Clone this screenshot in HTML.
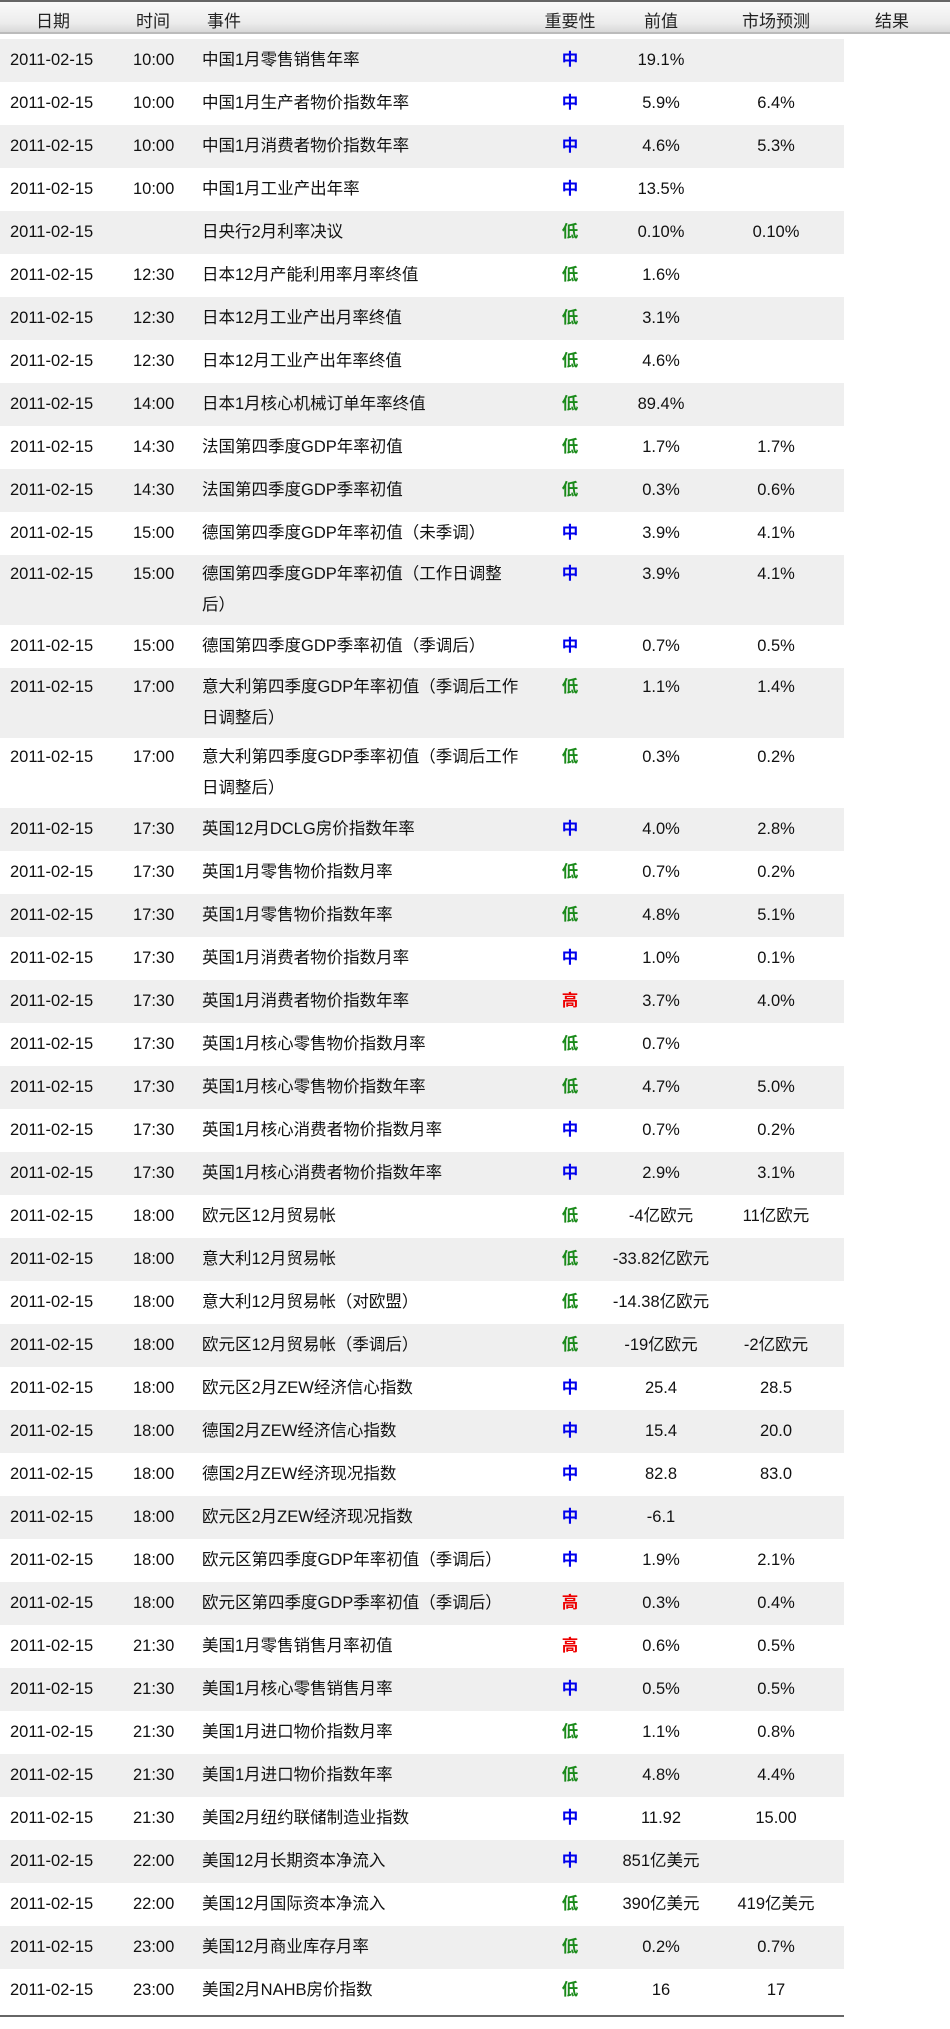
<!DOCTYPE html>
<html><head><meta charset="utf-8">
<style>
html,body{margin:0;padding:0;background:#fff;}
body{width:950px;height:2029px;position:relative;overflow:hidden;font-family:"Liberation Sans","Noto Sans CJK SC",sans-serif;color:#111;}
.hdr{position:absolute;left:0;top:0;width:950px;height:34px;background:linear-gradient(#fafafa,#ececec 70%,#d8d8d8);border-top:2px solid #666;box-sizing:border-box;border-bottom:2px solid #bbb;}
.hdr span{position:absolute;top:5px;font-size:17px;transform:translateX(-50%);white-space:nowrap;color:#222;}
.rows{position:absolute;left:0;top:39px;width:844px;}
.r{position:relative;height:43px;}
.r.d{height:70px;}
.r.g{background:#efefef;}
.r span{position:absolute;top:6px;line-height:31px;font-size:16.5px;white-space:nowrap;}
.r.d span{top:4px;}
.c1{left:10px;}
.c2{left:133px;}
.c3{left:202px;font-size:16.5px!important;}
.c4{left:570px;transform:translateX(-50%);font-weight:bold;}
.c5{left:661px;transform:translateX(-50%);}
.c6{left:776px;transform:translateX(-50%);}
.b{color:#0000ee}.gr{color:#1a8a1a}.rd{color:#ee0000}
.line{position:absolute;left:0;top:2015px;width:844px;height:2px;background:#666;}
</style></head><body>
<div class="hdr">
<span style="left:53px">日期</span><span style="left:153px">时间</span><span style="left:224px">事件</span><span style="left:570px">重要性</span><span style="left:661px">前值</span><span style="left:776px">市场预测</span><span style="left:892px">结果</span>
</div>
<div class="rows">
<div class="r g"><span class="c1">2011-02-15</span><span class="c2">10:00</span><span class="c3">中国1月零售销售年率</span><span class="c4 b">中</span><span class="c5">19.1%</span><span class="c6"></span></div>
<div class="r"><span class="c1">2011-02-15</span><span class="c2">10:00</span><span class="c3">中国1月生产者物价指数年率</span><span class="c4 b">中</span><span class="c5">5.9%</span><span class="c6">6.4%</span></div>
<div class="r g"><span class="c1">2011-02-15</span><span class="c2">10:00</span><span class="c3">中国1月消费者物价指数年率</span><span class="c4 b">中</span><span class="c5">4.6%</span><span class="c6">5.3%</span></div>
<div class="r"><span class="c1">2011-02-15</span><span class="c2">10:00</span><span class="c3">中国1月工业产出年率</span><span class="c4 b">中</span><span class="c5">13.5%</span><span class="c6"></span></div>
<div class="r g"><span class="c1">2011-02-15</span><span class="c2"></span><span class="c3">日央行2月利率决议</span><span class="c4 gr">低</span><span class="c5">0.10%</span><span class="c6">0.10%</span></div>
<div class="r"><span class="c1">2011-02-15</span><span class="c2">12:30</span><span class="c3">日本12月产能利用率月率终值</span><span class="c4 gr">低</span><span class="c5">1.6%</span><span class="c6"></span></div>
<div class="r g"><span class="c1">2011-02-15</span><span class="c2">12:30</span><span class="c3">日本12月工业产出月率终值</span><span class="c4 gr">低</span><span class="c5">3.1%</span><span class="c6"></span></div>
<div class="r"><span class="c1">2011-02-15</span><span class="c2">12:30</span><span class="c3">日本12月工业产出年率终值</span><span class="c4 gr">低</span><span class="c5">4.6%</span><span class="c6"></span></div>
<div class="r g"><span class="c1">2011-02-15</span><span class="c2">14:00</span><span class="c3">日本1月核心机械订单年率终值</span><span class="c4 gr">低</span><span class="c5">89.4%</span><span class="c6"></span></div>
<div class="r"><span class="c1">2011-02-15</span><span class="c2">14:30</span><span class="c3">法国第四季度GDP年率初值</span><span class="c4 gr">低</span><span class="c5">1.7%</span><span class="c6">1.7%</span></div>
<div class="r g"><span class="c1">2011-02-15</span><span class="c2">14:30</span><span class="c3">法国第四季度GDP季率初值</span><span class="c4 gr">低</span><span class="c5">0.3%</span><span class="c6">0.6%</span></div>
<div class="r"><span class="c1">2011-02-15</span><span class="c2">15:00</span><span class="c3">德国第四季度GDP年率初值（未季调）</span><span class="c4 b">中</span><span class="c5">3.9%</span><span class="c6">4.1%</span></div>
<div class="r g d"><span class="c1">2011-02-15</span><span class="c2">15:00</span><span class="c3">德国第四季度GDP年率初值（工作日调整<br>后）</span><span class="c4 b">中</span><span class="c5">3.9%</span><span class="c6">4.1%</span></div>
<div class="r"><span class="c1">2011-02-15</span><span class="c2">15:00</span><span class="c3">德国第四季度GDP季率初值（季调后）</span><span class="c4 b">中</span><span class="c5">0.7%</span><span class="c6">0.5%</span></div>
<div class="r g d"><span class="c1">2011-02-15</span><span class="c2">17:00</span><span class="c3">意大利第四季度GDP年率初值（季调后工作<br>日调整后）</span><span class="c4 gr">低</span><span class="c5">1.1%</span><span class="c6">1.4%</span></div>
<div class="r d"><span class="c1">2011-02-15</span><span class="c2">17:00</span><span class="c3">意大利第四季度GDP季率初值（季调后工作<br>日调整后）</span><span class="c4 gr">低</span><span class="c5">0.3%</span><span class="c6">0.2%</span></div>
<div class="r g"><span class="c1">2011-02-15</span><span class="c2">17:30</span><span class="c3">英国12月DCLG房价指数年率</span><span class="c4 b">中</span><span class="c5">4.0%</span><span class="c6">2.8%</span></div>
<div class="r"><span class="c1">2011-02-15</span><span class="c2">17:30</span><span class="c3">英国1月零售物价指数月率</span><span class="c4 gr">低</span><span class="c5">0.7%</span><span class="c6">0.2%</span></div>
<div class="r g"><span class="c1">2011-02-15</span><span class="c2">17:30</span><span class="c3">英国1月零售物价指数年率</span><span class="c4 gr">低</span><span class="c5">4.8%</span><span class="c6">5.1%</span></div>
<div class="r"><span class="c1">2011-02-15</span><span class="c2">17:30</span><span class="c3">英国1月消费者物价指数月率</span><span class="c4 b">中</span><span class="c5">1.0%</span><span class="c6">0.1%</span></div>
<div class="r g"><span class="c1">2011-02-15</span><span class="c2">17:30</span><span class="c3">英国1月消费者物价指数年率</span><span class="c4 rd">高</span><span class="c5">3.7%</span><span class="c6">4.0%</span></div>
<div class="r"><span class="c1">2011-02-15</span><span class="c2">17:30</span><span class="c3">英国1月核心零售物价指数月率</span><span class="c4 gr">低</span><span class="c5">0.7%</span><span class="c6"></span></div>
<div class="r g"><span class="c1">2011-02-15</span><span class="c2">17:30</span><span class="c3">英国1月核心零售物价指数年率</span><span class="c4 gr">低</span><span class="c5">4.7%</span><span class="c6">5.0%</span></div>
<div class="r"><span class="c1">2011-02-15</span><span class="c2">17:30</span><span class="c3">英国1月核心消费者物价指数月率</span><span class="c4 b">中</span><span class="c5">0.7%</span><span class="c6">0.2%</span></div>
<div class="r g"><span class="c1">2011-02-15</span><span class="c2">17:30</span><span class="c3">英国1月核心消费者物价指数年率</span><span class="c4 b">中</span><span class="c5">2.9%</span><span class="c6">3.1%</span></div>
<div class="r"><span class="c1">2011-02-15</span><span class="c2">18:00</span><span class="c3">欧元区12月贸易帐</span><span class="c4 gr">低</span><span class="c5">-4亿欧元</span><span class="c6">11亿欧元</span></div>
<div class="r g"><span class="c1">2011-02-15</span><span class="c2">18:00</span><span class="c3">意大利12月贸易帐</span><span class="c4 gr">低</span><span class="c5">-33.82亿欧元</span><span class="c6"></span></div>
<div class="r"><span class="c1">2011-02-15</span><span class="c2">18:00</span><span class="c3">意大利12月贸易帐（对欧盟）</span><span class="c4 gr">低</span><span class="c5">-14.38亿欧元</span><span class="c6"></span></div>
<div class="r g"><span class="c1">2011-02-15</span><span class="c2">18:00</span><span class="c3">欧元区12月贸易帐（季调后）</span><span class="c4 gr">低</span><span class="c5">-19亿欧元</span><span class="c6">-2亿欧元</span></div>
<div class="r"><span class="c1">2011-02-15</span><span class="c2">18:00</span><span class="c3">欧元区2月ZEW经济信心指数</span><span class="c4 b">中</span><span class="c5">25.4</span><span class="c6">28.5</span></div>
<div class="r g"><span class="c1">2011-02-15</span><span class="c2">18:00</span><span class="c3">德国2月ZEW经济信心指数</span><span class="c4 b">中</span><span class="c5">15.4</span><span class="c6">20.0</span></div>
<div class="r"><span class="c1">2011-02-15</span><span class="c2">18:00</span><span class="c3">德国2月ZEW经济现况指数</span><span class="c4 b">中</span><span class="c5">82.8</span><span class="c6">83.0</span></div>
<div class="r g"><span class="c1">2011-02-15</span><span class="c2">18:00</span><span class="c3">欧元区2月ZEW经济现况指数</span><span class="c4 b">中</span><span class="c5">-6.1</span><span class="c6"></span></div>
<div class="r"><span class="c1">2011-02-15</span><span class="c2">18:00</span><span class="c3">欧元区第四季度GDP年率初值（季调后）</span><span class="c4 b">中</span><span class="c5">1.9%</span><span class="c6">2.1%</span></div>
<div class="r g"><span class="c1">2011-02-15</span><span class="c2">18:00</span><span class="c3">欧元区第四季度GDP季率初值（季调后）</span><span class="c4 rd">高</span><span class="c5">0.3%</span><span class="c6">0.4%</span></div>
<div class="r"><span class="c1">2011-02-15</span><span class="c2">21:30</span><span class="c3">美国1月零售销售月率初值</span><span class="c4 rd">高</span><span class="c5">0.6%</span><span class="c6">0.5%</span></div>
<div class="r g"><span class="c1">2011-02-15</span><span class="c2">21:30</span><span class="c3">美国1月核心零售销售月率</span><span class="c4 b">中</span><span class="c5">0.5%</span><span class="c6">0.5%</span></div>
<div class="r"><span class="c1">2011-02-15</span><span class="c2">21:30</span><span class="c3">美国1月进口物价指数月率</span><span class="c4 gr">低</span><span class="c5">1.1%</span><span class="c6">0.8%</span></div>
<div class="r g"><span class="c1">2011-02-15</span><span class="c2">21:30</span><span class="c3">美国1月进口物价指数年率</span><span class="c4 gr">低</span><span class="c5">4.8%</span><span class="c6">4.4%</span></div>
<div class="r"><span class="c1">2011-02-15</span><span class="c2">21:30</span><span class="c3">美国2月纽约联储制造业指数</span><span class="c4 b">中</span><span class="c5">11.92</span><span class="c6">15.00</span></div>
<div class="r g"><span class="c1">2011-02-15</span><span class="c2">22:00</span><span class="c3">美国12月长期资本净流入</span><span class="c4 b">中</span><span class="c5">851亿美元</span><span class="c6"></span></div>
<div class="r"><span class="c1">2011-02-15</span><span class="c2">22:00</span><span class="c3">美国12月国际资本净流入</span><span class="c4 gr">低</span><span class="c5">390亿美元</span><span class="c6">419亿美元</span></div>
<div class="r g"><span class="c1">2011-02-15</span><span class="c2">23:00</span><span class="c3">美国12月商业库存月率</span><span class="c4 gr">低</span><span class="c5">0.2%</span><span class="c6">0.7%</span></div>
<div class="r"><span class="c1">2011-02-15</span><span class="c2">23:00</span><span class="c3">美国2月NAHB房价指数</span><span class="c4 gr">低</span><span class="c5">16</span><span class="c6">17</span></div>
</div>
<div class="line"></div>
</body></html>
